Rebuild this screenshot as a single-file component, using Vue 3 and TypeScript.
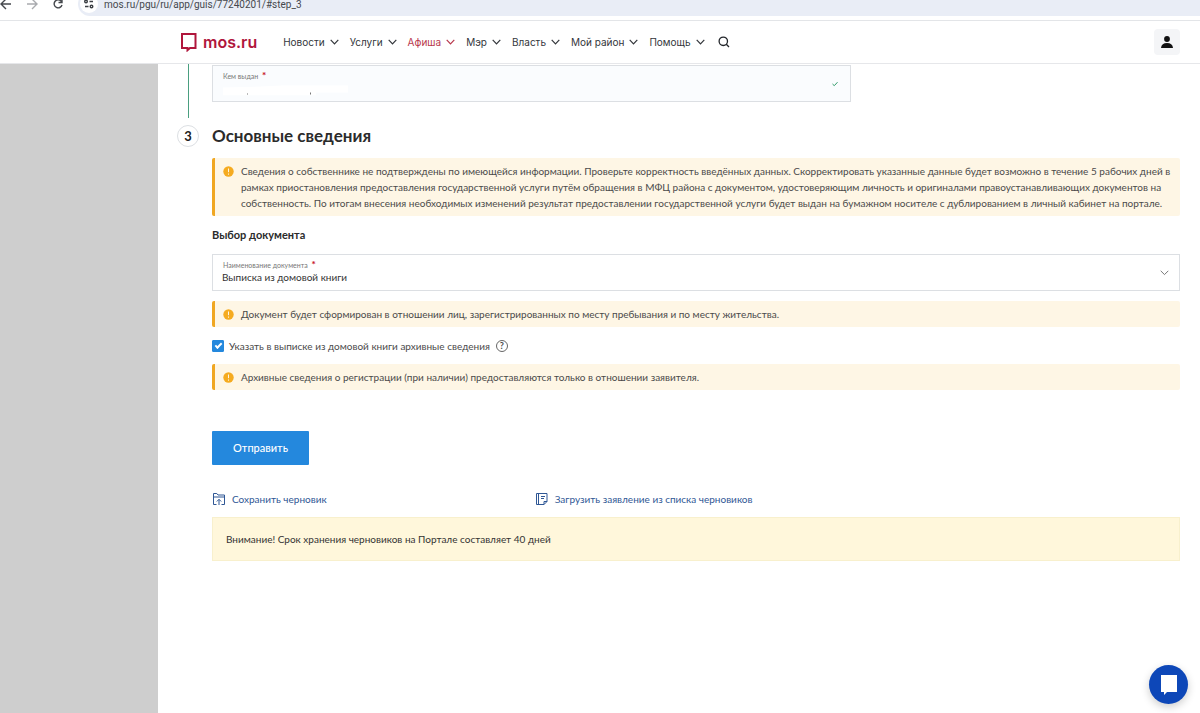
<script setup lang="ts">
import { ref } from 'vue'

interface NavItem {
  title: string
  active?: boolean
}

const nav: NavItem[] = [
  { title: 'Новости' },
  { title: 'Услуги' },
  { title: 'Афиша', active: true },
  { title: 'Мэр' },
  { title: 'Власть' },
  { title: 'Мой район' },
  { title: 'Помощь' },
]

const address = ref('mos.ru/pgu/ru/app/guis/77240201/#step_3')
const issuer = ref('')
const documentName = ref('Выписка из домовой книги')
const withArchive = ref(true)
</script>

<template>
  <div class="page">
    <div class="toolbar">
      <button class="tool" type="button" aria-label="Назад">
        <svg width="14" height="14" viewBox="0 0 14 14"><path d="M11 7H1M6 2 1 7l5 5" /></svg>
      </button>
      <button class="tool muted" type="button" aria-label="Вперёд">
        <svg width="14" height="14" viewBox="0 0 14 14"><path d="M1 7h10M6 2l5 5-5 5" /></svg>
      </button>
      <button class="tool" type="button" aria-label="Обновить">
        <svg width="14" height="14" viewBox="0 0 14 14"><path d="M10 8a4 4 0 1 1-1-4l1 1M10 2v3.500H6.500" /></svg>
      </button>
      <div class="omnibox">
        <span class="site-info">
          <svg width="12" height="12" viewBox="0 0 12 12">
            <path d="M6.500 3.500H10M2 8.500h3.500" />
            <circle cx="3" cy="3.500" r="1.300" />
            <circle cx="8.500" cy="8.500" r="1.300" />
          </svg>
        </span>
        <input v-model="address" class="address" type="text" aria-label="Адрес" />
      </div>
    </div>

    <header class="header">
      <a class="logo" href="#">
        <svg width="16" height="19" viewBox="0 0 16 19"><path d="M1 1h13.500v14H9l-2.500 2.200V15H1Z" /></svg>
        <span>mos.ru</span>
      </a>
      <nav class="nav">
        <a v-for="item in nav" :key="item.title" href="#" :class="{ active: item.active }">
          {{ item.title }}
          <svg width="9" height="6" viewBox="0 0 9 6"><path d="M.7.8 4.500 4.800 8.300.8" /></svg>
        </a>
      </nav>
      <button class="search" type="button" aria-label="Поиск">
        <svg width="12" height="12" viewBox="0 0 12 12"><circle cx="5.300" cy="5.300" r="4.200" /><path d="m8.300 8.300 2.700 2.700" /></svg>
      </button>
      <button class="profile" type="button" aria-label="Профиль">
        <svg width="12" height="12" viewBox="0 0 12 12"><circle cx="6" cy="3" r="2.900" /><path d="M0 12c.3-3.300 2.500-5 6-5s5.700 1.700 6 5Z" /></svg>
      </button>
    </header>

    <div class="body">
      <aside class="side"></aside>
      <main class="main">
        <section class="step">
          <span class="thread"></span>
          <div class="field issuer">
            <label for="issuer">Кем выдан <b>*</b></label>
            <input id="issuer" v-model="issuer" type="text" />
            <svg class="cover" width="128" height="11" viewBox="0 0 128 11">
              <path class="sheet" d="M2 3 40 2 60 1h67v7H95v3H2Z" />
              <path class="specks" d="M26 9h1v1h-1ZM89 8h1v2h-1Z" />
            </svg>
            <svg class="mark" width="6" height="5" viewBox="0 0 6 5"><path d="M.5 2.500 2.300 4.200 5.500.7" /></svg>
          </div>
        </section>

        <form class="step current" @submit.prevent>
          <span class="number">3</span>
          <div class="content">
            <h2>Основные сведения</h2>

            <p class="alert">
              <svg width="11" height="11" viewBox="0 0 11 11"><circle cx="5.500" cy="5.500" r="5.200" /><path d="M5.500 2.500v3.700M5.500 7.500v1.200" /></svg>
              <span>Сведения о собственнике не подтверждены по имеющейся информации. Проверьте корректность введённых данных. Скорректировать указанные данные будет возможно в течение 5 рабочих дней в рамках приостановления предоставления государственной услуги путём обращения в МФЦ района с документом, удостоверяющим личность и оригиналами правоустанавливающих документов на собственность. По итогам внесения необходимых изменений результат предоставлении государственной услуги будет выдан на бумажном носителе с дублированием в личный кабинет на портале.</span>
            </p>

            <h3>Выбор документа</h3>

            <div class="field">
              <label for="document">Наименование документа <b>*</b></label>
              <select id="document" v-model="documentName">
                <option>Выписка из домовой книги</option>
              </select>
              <svg class="arrow" width="9" height="6" viewBox="0 0 9 6"><path d="M.7.8 4.500 4.600 8.300.8" /></svg>
            </div>

            <p class="alert after-field">
              <svg width="11" height="11" viewBox="0 0 11 11"><circle cx="5.500" cy="5.500" r="5.200" /><path d="M5.500 2.500v3.700M5.500 7.500v1.200" /></svg>
              <span>Документ будет сформирован в отношении лиц, зарегистрированных по месту пребывания и по месту жительства.</span>
            </p>

            <div class="check">
              <input id="archive" v-model="withArchive" type="checkbox" />
              <label for="archive">Указать в выписке из домовой книги архивные сведения</label>
              <button class="help" type="button" aria-label="Подсказка">?</button>
            </div>

            <p class="alert">
              <svg width="11" height="11" viewBox="0 0 11 11"><circle cx="5.500" cy="5.500" r="5.200" /><path d="M5.500 2.500v3.700M5.500 7.500v1.200" /></svg>
              <span>Архивные сведения о регистрации (при наличии) предоставляются только в отношении заявителя.</span>
            </p>

            <button class="submit" type="submit">Отправить</button>

            <div class="drafts">
              <a href="#">
                <svg width="14" height="14" viewBox="0 0 14 14">
                  <path d="M4.500 12.500h-3V1.500h3.300l1.200 1.500h6.500v9.500h-3M1.500 5h11M7 13V7.500M4.800 9.500 7 7.300l2.200 2.200" />
                </svg>
                Сохранить черновик
              </a>
              <a href="#">
                <svg width="14" height="14" viewBox="0 0 14 14">
                  <path d="M1.500 1.500h10.500v8l-3 3H1.500ZM3.500 1.500v11M12 9.500H9v3M6 4.500h4M6 6.500h3" />
                </svg>
                Загрузить заявление из списка черновиков
              </a>
            </div>

            <p class="notice">Внимание! Срок хранения черновиков на Портале составляет 40 дней</p>
          </div>
        </form>
      </main>
    </div>

    <button class="chat" type="button" aria-label="Чат">
      <svg width="18" height="22" viewBox="0 0 18 22"><path d="M1 1h16v17H7l-3 3v-3H1Z" /></svg>
    </button>
  </div>
</template>

<style>
body {
  margin: 0;
  background: #fff;
}
</style>

<style scoped>
.page {
  min-height: 100vh;
  display: flex;
  flex-direction: column;
  font-family: Lato, "Noto Sans", sans-serif;
  font-size: 10px;
  line-height: 16px;
  color: #4a4a4a;
}
button,
input,
select {
  box-sizing: border-box;
  margin: 0;
  padding: 0;
  border: 0;
  background: none;
  font: inherit;
  color: inherit;
}
a {
  text-decoration: none;
}
svg {
  flex: none;
  fill: none;
  stroke: currentColor;
}

.toolbar {
  box-sizing: border-box;
  height: 21px;
  padding-bottom: 4px;
  border-bottom: 1px solid #e3e5e8;
  display: flex;
  align-items: flex-end;
  overflow: hidden;
}
.tool {
  flex: none;
  width: 26px;
  height: 24px;
  padding-right: 14px;
  display: flex;
  align-items: center;
  color: #45484d;
}
.tool svg {
  stroke-width: 1.4;
}
.tool.muted {
  color: #a9abaf;
}
.omnibox {
  flex: 1;
  height: 24px;
  padding-left: 2px;
  border-radius: 12px 0 0 12px;
  background: #e9edf6;
  display: flex;
  align-items: center;
  gap: 6px;
}
.site-info {
  width: 18px;
  height: 18px;
  border-radius: 50%;
  background: #fff;
  display: grid;
  place-items: center;
  color: #3c3f44;
}
.site-info svg {
  stroke-width: 1.4;
}
.address {
  flex: 1;
  height: 24px;
  font-family: Roboto, "Noto Sans", sans-serif;
  font-size: 10px;
  color: #45484d;
}

.header {
  box-sizing: border-box;
  height: 43px;
  padding: 0 20px 0 181px;
  border-bottom: 1px solid #e6e7ea;
  display: flex;
  align-items: center;
  font-family: Inter, sans-serif;
}
.logo {
  display: flex;
  align-items: center;
  gap: 6px;
  margin-right: 26px;
  font-size: 16px;
  font-weight: 600;
  color: #b0163c;
}
.logo svg {
  stroke-width: 2;
}
.nav {
  display: flex;
  gap: 11px;
}
.nav a {
  display: flex;
  align-items: center;
  gap: 5px;
  color: #33363b;
}
.nav a.active {
  color: #b8384c;
}
.nav svg {
  stroke-width: 1.2;
}
.search {
  margin-left: 13px;
  height: 24px;
  display: flex;
  align-items: center;
  color: #22252a;
}
.search svg {
  stroke-width: 1.3;
}
.profile {
  width: 26px;
  height: 26px;
  margin-left: auto;
  border-radius: 4px;
  background: #f4f5f7;
  display: grid;
  place-items: center;
  color: #111;
}
.profile svg {
  fill: currentColor;
  stroke: none;
}

.body {
  flex: 1;
  display: flex;
}
.side {
  flex: none;
  width: 158px;
  background: #cecece;
}
.main {
  flex: 1;
  min-width: 0;
  padding: 0 20px 24px 19px;
}
.step {
  display: grid;
  grid-template-columns: 22px minmax(0, 1fr);
  column-gap: 13px;
}
.thread {
  justify-self: center;
  width: 1px;
  height: 54px;
  background: #4a9f80;
}
.current {
  padding-top: 7px;
}
.number {
  box-sizing: border-box;
  width: 22px;
  height: 22px;
  border: 1px solid #dcdfe3;
  border-radius: 50%;
  display: grid;
  place-items: center;
  font-size: 13px;
  font-weight: 700;
  color: #222;
}
h2 {
  margin: 0 0 11px;
  font-size: 17px;
  line-height: 22px;
  font-weight: 700;
  color: #2b2b2b;
}
h3 {
  margin: 11px 0;
  font-size: 11px;
  line-height: 16px;
  font-weight: 700;
  color: #2b2b2b;
}

.field {
  position: relative;
  box-sizing: border-box;
  height: 37px;
  border: 1px solid #dcdfe3;
}
.field label {
  position: absolute;
  top: 4px;
  left: 10px;
  font-size: 7px;
  line-height: 10px;
  color: #777;
  pointer-events: none;
}
.field label b {
  margin-left: 2px;
  font-size: 10px;
  font-weight: 900;
  color: #c8202f;
}
.field input,
.field select {
  width: 100%;
  height: 100%;
  padding: 8px 30px 0 9px;
  appearance: none;
  color: #333;
}
.field svg {
  position: absolute;
  top: 50%;
  transform: translateY(-50%);
}
.issuer {
  width: 66%;
  margin-top: 1px;
  background: #fafcfe;
}
.field .cover {
  top: 24px;
  left: 8px;
  stroke: none;
  pointer-events: none;
}
.sheet {
  fill: #fff;
}
.specks {
  fill: #777;
}
.mark {
  right: 12px;
  color: #2f9a68;
}
.arrow {
  right: 10px;
  color: #777;
}

.alert {
  margin: 0;
  padding: 5px 8px;
  border-left: 3px solid #f0a722;
  border-radius: 2px;
  background: #fef6e5;
  display: flex;
  gap: 7px;
}
.alert svg {
  margin-top: 3px;
  fill: #f5ab20;
  stroke: none;
}
.alert svg path {
  stroke: #fef6e5;
}
.after-field {
  margin-top: 10px;
}
.check {
  height: 37px;
  display: flex;
  align-items: center;
}
.check input {
  appearance: none;
  width: 12px;
  height: 12px;
  margin-right: 5px;
  border: 1px solid #2488dd;
  border-radius: 1px;
  display: grid;
  place-items: center;
}
.check input:checked {
  background: #2488dd;
}
.check input:checked::before {
  content: "";
  width: 5px;
  height: 2px;
  margin-bottom: 2px;
  border-left: 2px solid #fff;
  border-bottom: 2px solid #fff;
  transform: rotate(-45deg);
}
.help {
  width: 12px;
  height: 12px;
  margin-left: 6px;
  border: 1px solid #666;
  border-radius: 50%;
  display: grid;
  place-items: center;
  font-size: 9px;
  line-height: 10px;
  font-weight: 700;
}
.submit {
  display: block;
  height: 34px;
  margin-top: 41px;
  padding: 0 21px;
  border-radius: 1px;
  background: #2488dd;
  font-size: 11px;
  font-weight: 500;
  color: #fff;
}
.drafts {
  display: grid;
  grid-template-columns: 1fr 2fr;
  margin: 26px 0 10px;
}
.drafts a {
  display: flex;
  align-items: center;
  gap: 6px;
  color: #2f5795;
}
.notice {
  margin: 0;
  padding: 13px;
  border: 1px solid #f8f0cd;
  background: #fff7db;
  color: #333;
}

.chat {
  position: fixed;
  right: 12px;
  bottom: 9px;
  width: 39px;
  height: 39px;
  border-radius: 50%;
  background: #0d47b8;
  box-shadow: 0 3px 8px rgba(0, 0, 0, 0.2);
  display: grid;
  place-items: center;
}
.chat svg {
  fill: #fff;
  stroke: none;
}
</style>
